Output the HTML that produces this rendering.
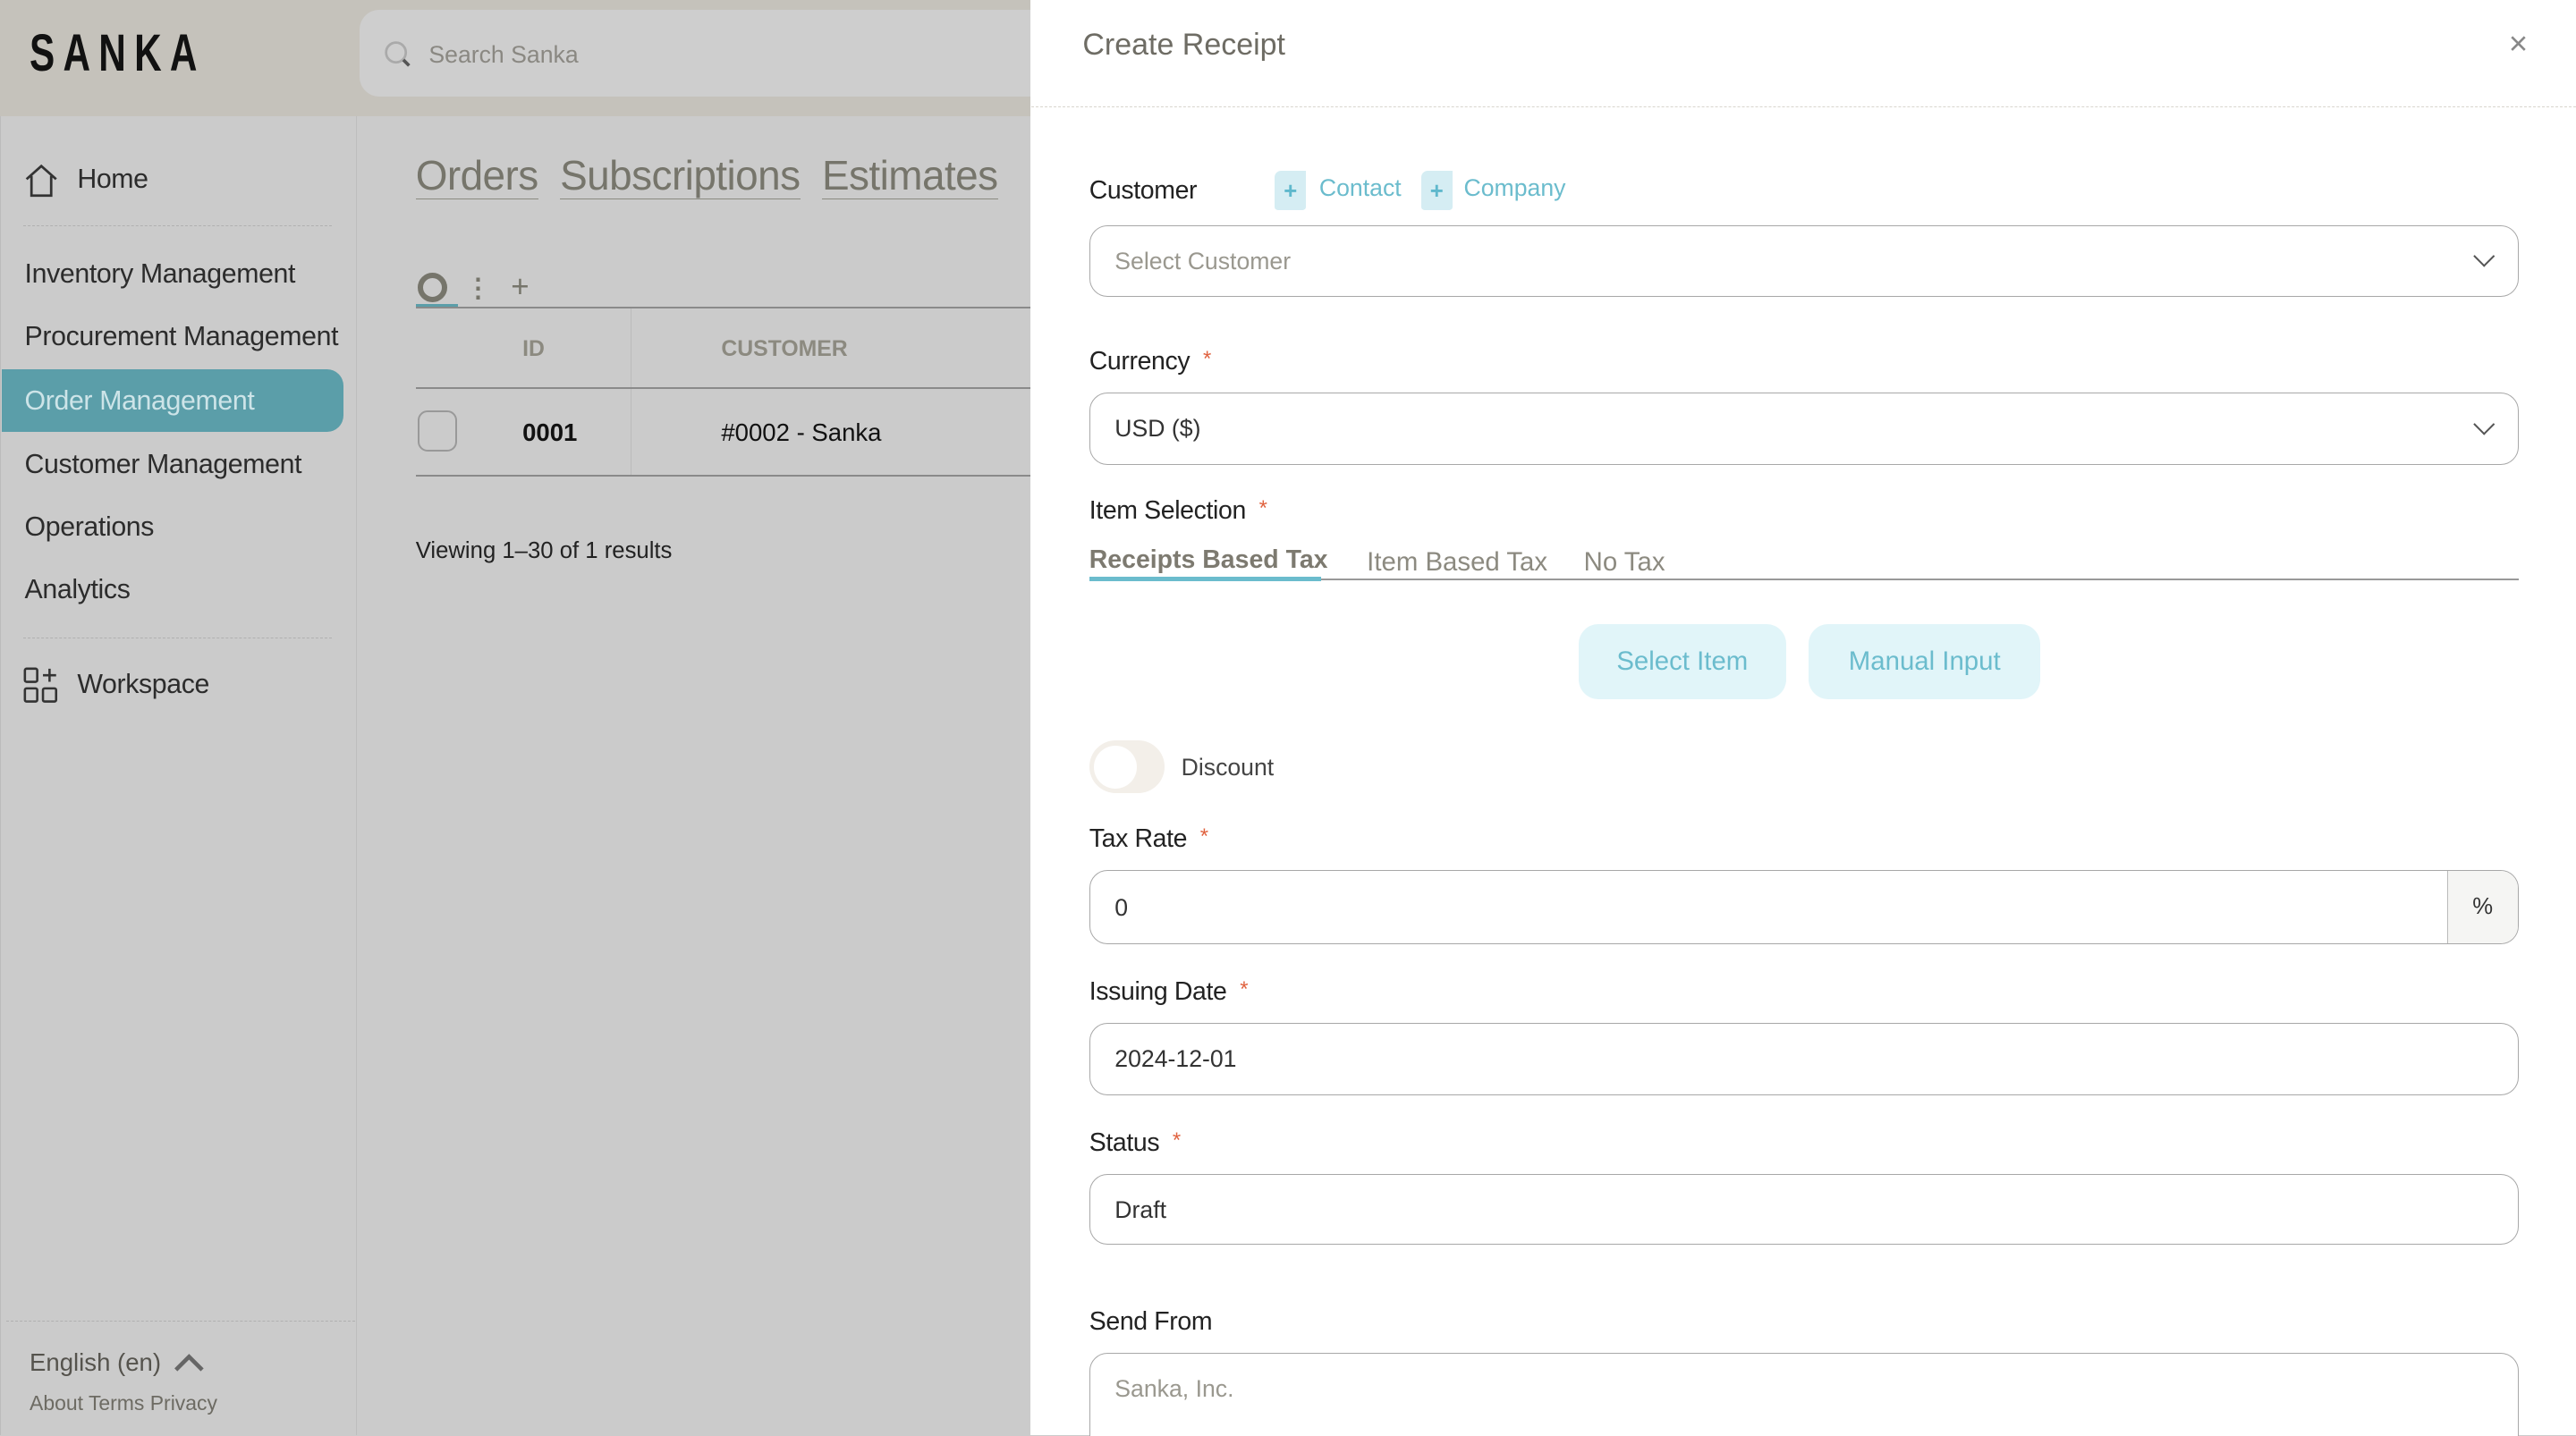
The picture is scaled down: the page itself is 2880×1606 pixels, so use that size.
<!DOCTYPE html>
<html><head><meta charset="utf-8"><style>
html{zoom:1.836735;overflow:hidden;height:874px}
*{box-sizing:border-box;margin:0;padding:0}
body{width:1568px;height:874px;overflow:hidden;position:relative;background:#cbcbcb;font-family:"Liberation Sans",sans-serif;color:#2a2a2a}
.a{position:absolute;white-space:nowrap}
.hdr{left:0;top:0;width:627px;height:71px;background:#c5c2bb}
.search{left:219px;top:6px;width:420px;height:53px;background:#cecece;border-radius:12px}
.side{left:0;top:71px;width:217px;height:803px;border-right:1px solid #bdbdbd;border-left:1px solid #bcbcbc}
.nav{font-size:16.5px;color:#2c2c2c;letter-spacing:-0.2px}
.dash{border-top:1px dashed #b0b0b0}
.panel{left:627px;top:0;width:941px;height:874px;background:#fff}
.lbl{font-size:15.5px;color:#222;letter-spacing:-0.2px}
.req{color:#e0623f;font-size:13px;margin-left:8px;vertical-align:top}
.inp{border:1px solid #a8a8a8;border-radius:11px;background:#fff}
.inp span{position:absolute;left:15px;font-size:14.5px;color:#333}
.chev{position:absolute;right:16px;width:9px;height:9px;border-right:1.5px solid #555;border-bottom:1.5px solid #555;transform:rotate(45deg)}
.tab{font-size:16px;color:#8c8a80}
.btn{background:#e1f5f9;border-radius:12px;color:#6bbccd;font-size:16px;text-align:center}
</style></head><body>
<div class="a hdr"></div>
<div class="a" style="left:18px;top:14px;font-size:32px;font-weight:bold;letter-spacing:7px;color:#111;transform:scaleX(.72);transform-origin:left">SANKA</div>
<div class="a search"></div>
<svg class="a" style="left:233px;top:24px" width="18" height="18" viewBox="0 0 18 18"><circle cx="8" cy="8" r="6" fill="none" stroke="#aaa" stroke-width="1.5"/><path d="M12.5 12.5L16 16" stroke="#555" stroke-width="2"/></svg>
<div class="a" style="left:261px;top:25px;font-size:14.5px;color:#8a8882">Search Sanka</div>

<div class="a side"></div>
<svg class="a" style="left:14px;top:99px" width="22" height="22" viewBox="0 0 22 22"><path d="M2 10L11 2L20 10M5 8V20H17V8" fill="none" stroke="#333" stroke-width="1.5"/></svg>
<div class="a nav" style="left:47px;top:100px">Home</div>
<div class="a dash" style="left:14px;top:137px;width:188px"></div>
<div class="a nav" style="left:15px;top:158px">Inventory Management</div>
<div class="a nav" style="left:15px;top:196px;width:202px;overflow:hidden">Procurement Management</div>
<div class="a" style="left:1px;top:225px;width:208px;height:38px;background:#5b9ea9;border-radius:0 10px 10px 0"></div>
<div class="a nav" style="left:15px;top:235px;color:#cde4e8">Order Management</div>
<div class="a nav" style="left:15px;top:274px">Customer Management</div>
<div class="a nav" style="left:15px;top:312px">Operations</div>
<div class="a nav" style="left:15px;top:350px">Analytics</div>
<div class="a dash" style="left:14px;top:388px;width:188px"></div>
<svg class="a" style="left:14px;top:406px" width="22" height="22" viewBox="0 0 22 22" fill="none" stroke="#333" stroke-width="1.4"><rect x="1" y="1" width="7.5" height="8" rx="1"/><rect x="1" y="13" width="7.5" height="8" rx="1"/><rect x="12" y="13" width="8" height="8" rx="1"/><path d="M16 1V9M12 5H20"/></svg>
<div class="a nav" style="left:47px;top:408px">Workspace</div>
<div class="a dash" style="left:4px;top:804px;width:212px"></div>
<div class="a" style="left:18px;top:821px;font-size:15px;color:#55534d">English (en)</div>
<svg class="a" style="left:105px;top:822px" width="20" height="14" viewBox="0 0 20 14"><path d="M2 12L10 4L18 12" fill="none" stroke="#666" stroke-width="2.5"/></svg>
<div class="a" style="left:18px;top:847px;font-size:12.5px;color:#6d6b63">About Terms Privacy</div>

<div class="a" style="left:253px;top:92px;font-size:25px;color:#76756b;letter-spacing:-0.3px"><span style="border-bottom:1px solid #8a8a80">Orders</span>&nbsp;&nbsp;<span style="border-bottom:1px solid #8a8a80">Subscriptions</span>&nbsp;&nbsp;<span style="border-bottom:1px solid #8a8a80">Estimates</span></div>
<div class="a" style="left:254px;top:166px;width:18px;height:18px;border:3.5px solid #76756b;border-radius:50%"></div>
<div class="a" style="left:283px;top:166px;font-size:16px;color:#76756b;font-weight:bold">⋮</div>
<div class="a" style="left:311px;top:164px;font-size:19px;color:#76756b">+</div>
<div class="a" style="left:253px;top:185px;width:26px;height:3px;background:#5b9ea9"></div>
<div class="a" style="left:253px;top:187px;width:374px;border-top:1.5px solid #8a8a8a"></div>
<div class="a" style="left:384px;top:188px;height:101px;border-left:1px solid #bbb"></div>
<div class="a" style="left:318px;top:205px;font-size:13.5px;color:#8c8a80;font-weight:bold">ID</div>
<div class="a" style="left:439px;top:205px;font-size:13.5px;color:#8c8a80;font-weight:bold">CUSTOMER</div>
<div class="a" style="left:253px;top:236px;width:374px;border-top:1.5px solid #8a8a8a"></div>
<div class="a" style="left:254px;top:250px;width:24px;height:25px;border:1.2px solid #999;border-radius:6px"></div>
<div class="a" style="left:318px;top:255px;font-size:15px;font-weight:bold;color:#111">0001</div>
<div class="a" style="left:439px;top:255px;font-size:15px;color:#111">#0002 - Sanka</div>
<div class="a" style="left:253px;top:289px;width:374px;border-top:1.5px solid #8a8a8a"></div>
<div class="a" style="left:253px;top:328px;font-size:14px;color:#222">Viewing 1–30 of 1 results</div>

<div class="a panel"></div>
<div class="a" style="left:659px;top:17px;font-size:18.5px;color:#6e6c64">Create Receipt</div>
<div class="a" style="left:1527px;top:15px;font-size:20px;color:#888">×</div>
<div class="a" style="left:628px;top:65px;width:940px;border-top:1px dashed #d8d5ce"></div>

<div class="a lbl" style="left:663px;top:107px">Customer</div>
<div class="a" style="left:776px;top:104px;width:19px;height:24px;background:#d5edf3;border-radius:4px 0 2px 2px;color:#5fb8cc;font-size:14px;text-align:center;line-height:26px;font-weight:bold">+</div>
<div class="a" style="left:803px;top:106px;font-size:14.5px;color:#6bbccd">Contact</div>
<div class="a" style="left:865px;top:104px;width:19px;height:24px;background:#d5edf3;border-radius:4px 0 2px 2px;color:#5fb8cc;font-size:14px;text-align:center;line-height:26px;font-weight:bold">+</div>
<div class="a" style="left:891px;top:106px;font-size:14.5px;color:#6bbccd">Company</div>
<div class="a inp" style="left:663px;top:137px;width:870px;height:44px"><span style="top:13px;color:#9a988f">Select Customer</span><i class="chev" style="top:14px"></i></div>

<div class="a lbl" style="left:663px;top:211px">Currency<span class="req">*</span></div>
<div class="a inp" style="left:663px;top:239px;width:870px;height:44px"><span style="top:13px">USD ($)</span><i class="chev" style="top:14px"></i></div>

<div class="a lbl" style="left:663px;top:302px">Item Selection<span class="req">*</span></div>
<div class="a" style="left:663px;top:352px;width:870px;border-top:1.5px solid #999"></div>
<div class="a tab" style="left:663px;top:332px;font-weight:bold;color:#7d7a70;font-size:15.5px">Receipts Based Tax</div>
<div class="a" style="left:663px;top:351px;width:141px;height:3px;background:#6bbccd"></div>
<div class="a tab" style="left:832px;top:333px">Item Based Tax</div>
<div class="a tab" style="left:964px;top:333px">No Tax</div>

<div class="a btn" style="left:961px;top:380px;width:126px;height:46px;line-height:46px">Select Item</div>
<div class="a btn" style="left:1101px;top:380px;width:141px;height:46px;line-height:46px">Manual Input</div>

<div class="a" style="left:663px;top:451px;width:46px;height:32px;border-radius:16px;background:#f3efe9"></div>
<div class="a" style="left:666px;top:454px;width:26px;height:26px;border-radius:50%;background:#fff"></div>
<div class="a" style="left:719px;top:459px;font-size:14.5px;color:#444">Discount</div>

<div class="a lbl" style="left:663px;top:502px">Tax Rate<span class="req">*</span></div>
<div class="a inp" style="left:663px;top:530px;width:870px;height:45px;overflow:hidden"><span style="top:14px">0</span><div style="position:absolute;right:0;top:0;width:43px;height:45px;background:#f5f5f3;border-left:1px solid #bbb;text-align:center;line-height:44px;font-size:14px;color:#333">%</div></div>

<div class="a lbl" style="left:663px;top:595px">Issuing Date<span class="req">*</span></div>
<div class="a inp" style="left:663px;top:623px;width:870px;height:44px"><span style="top:13px">2024-12-01</span></div>

<div class="a lbl" style="left:663px;top:687px">Status<span class="req">*</span></div>
<div class="a inp" style="left:663px;top:715px;width:870px;height:43px"><span style="top:13px">Draft</span></div>

<div class="a lbl" style="left:663px;top:796px">Send From</div>
<div class="a inp" style="left:663px;top:824px;width:870px;height:60px;border-bottom-left-radius:0;border-bottom-right-radius:0"><span style="top:13px;color:#9a988f">Sanka, Inc.</span></div>
</body></html>
